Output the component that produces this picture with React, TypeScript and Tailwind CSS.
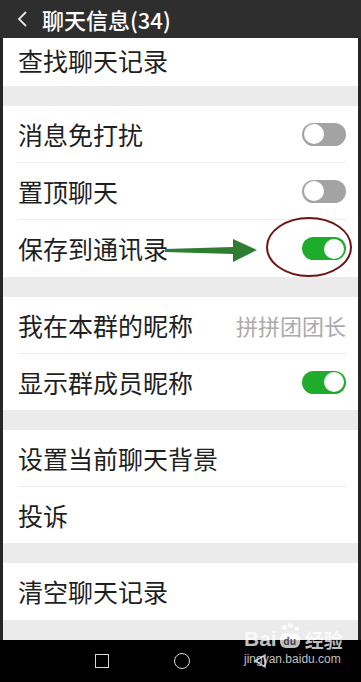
import type { ReactNode } from "react";

const FONT = { fontFamily: '"Noto Sans CJK SC", "Noto Sans", "Liberation Sans", sans-serif' };

function Toggle({ on }: { on: boolean }) {
  return (
    <div
      className={`flex h-[23px] w-[44px] items-center rounded-full px-[2px] ${
        on ? "justify-end bg-[#1fac2a]" : "justify-start bg-[#a3a3a3]"
      }`}
    >
      <div className="size-[20px] rounded-full bg-white" />
    </div>
  );
}

function Row({ label, right, last, short }: { label: string; right?: ReactNode; last?: boolean; short?: boolean }) {
  return (
    <div className="pl-[15px] pr-[12px]">
      <div
        className={`flex items-center justify-between ${short ? "h-[56px]" : "h-[57px]"} ${
          last ? "" : "border-b border-[#ececec]"
        }`}
      >
        <span className="text-[25px] leading-none text-[#1f1f1f]">{label}</span>
        {right}
      </div>
    </div>
  );
}

function Gap() {
  return <div className="h-[20px] bg-[#ebebeb]" />;
}

export default function App() {
  return (
    <div className="relative h-[682px] w-[361px] overflow-hidden bg-[#262626]" style={FONT}>
      {/* barre de titre */}
      <div className="flex h-[38px] items-center gap-[14px] bg-[#2e2e2e] pl-[16px]">
        <svg width="12" height="18" viewBox="0 0 12 18" fill="none">
          <polyline points="10,2 3,9 10,16" stroke="#e6e6e6" strokeWidth="1.8" />
        </svg>
        <span className="text-[22px] font-medium leading-none text-white">聊天信息(34)</span>
      </div>

      <div className="mx-[3px] bg-[#ebebeb]">
        <div className="bg-white">
          <div className="flex h-[48px] items-center pl-[15px] pb-[4px]">
            <span className="text-[25px] leading-none text-[#1f1f1f]">查找聊天记录</span>
          </div>
        </div>
        <Gap />
        <div className="relative bg-white">
          <Row label="消息免打扰" right={<Toggle on={false} />} />
          <Row label="置顶聊天" right={<Toggle on={false} />} />
          <Row label="保存到通讯录" right={<Toggle on />} last />
          {/* annotation : flèche + ellipse */}
          <svg
            className="pointer-events-none absolute left-0 top-0"
            width="355"
            height="171"
            viewBox="0 0 355 171"
          >
            <polygon points="162,143 230,141 230,133 254,144 230,156 230,148 162,146" fill="#2f7d32" />
            <ellipse cx="306" cy="141" rx="42" ry="29" fill="none" stroke="#6e1414" strokeWidth="2" />
          </svg>
        </div>
        <Gap />
        <div className="bg-white">
          <Row label="我在本群的昵称" right={<span className="text-[22px] leading-none text-[#ababab]">拼拼团团长</span>} />
          <Row label="显示群成员昵称" right={<Toggle on />} last short />
        </div>
        <Gap />
        <div className="bg-white">
          <Row label="设置当前聊天背景" />
          <Row label="投诉" last short />
        </div>
        <Gap />
        <div className="bg-white">
          <Row label="清空聊天记录" last />
        </div>
        <Gap />
      </div>

      {/* barre de navigation */}
      <div className="relative flex h-[42px] items-center bg-black">
        <div className="ml-[95px] size-[14px] border-[1.5px] border-[#d8d8d8]" />
        <div className="ml-[65px] size-[16px] rounded-full border-[1.5px] border-[#d8d8d8]" />
        <svg className="ml-[62px]" width="16" height="16" viewBox="0 0 16 16" fill="none">
          <polygon points="13,2 13,14 3,8" stroke="#bdbdbd" strokeWidth="1.5" />
        </svg>
      </div>

      {/* filigrane */}
      <div className="pointer-events-none absolute left-[244px] top-[625px] flex flex-col items-start text-white/75">
        <div className="flex items-end gap-[2px] leading-none">
          <span className="text-[21px] font-bold" style={{ fontFamily: '"Liberation Sans", sans-serif' }}>
            Bai
          </span>
          <div className="relative h-[24px] w-[22px]">
            <div className="absolute left-[3px] top-[0px] size-[5px] rounded-full bg-white/75" />
            <div className="absolute left-[9px] top-[-2px] size-[5px] rounded-full bg-white/75" />
            <div className="absolute left-[15px] top-[1px] size-[5px] rounded-full bg-white/75" />
            <div className="absolute bottom-[1px] left-[1px] flex h-[15px] w-[20px] items-center justify-center rounded-[6px] bg-white/75 text-[10px] font-bold text-black/70">
              du
            </div>
          </div>
          <span className="ml-[2px] text-[19px] font-bold">经验</span>
        </div>
        <span className="mt-[4px] text-[12px] leading-none" style={{ fontFamily: '"Liberation Sans", sans-serif' }}>
          jingyan.baidu.com
        </span>
      </div>
    </div>
  );
}
